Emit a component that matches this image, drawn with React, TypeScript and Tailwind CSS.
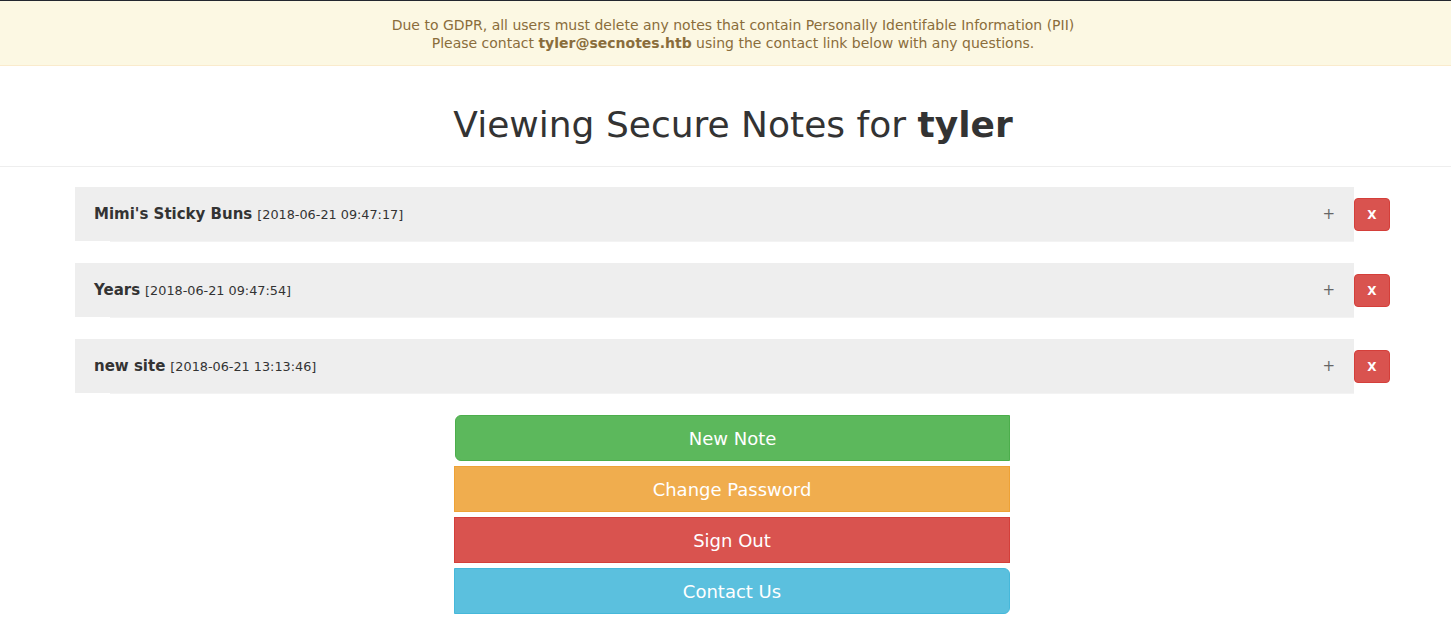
import React from "react";

const notes = [
  { title: "Mimi's Sticky Buns", date: "2018-06-21 09:47:17" },
  { title: "Years", date: "2018-06-21 09:47:54" },
  { title: "new site", date: "2018-06-21 13:13:46" },
];

const NoteRow = ({ title, date }: { title: string; date: string }) => (
  <div className="flex items-start">
    <div className="w-[1279px]">
      <div className="h-[54px] bg-[#eeeeee] flex items-center pl-[19px] pr-[19px] pt-[1px]">
        <span className="text-[15px] font-bold text-[#333]">{title}</span>
        <span className="text-[12.8px] text-[#333] ml-[5px] mt-[1px]">[{date}]</span>
        <span className="ml-auto text-[15px] text-[#666] leading-none">+</span>
      </div>
      <div className="ml-[35px] h-[2px] border-t border-[#f3f3f3]" />
    </div>
    <button className="mt-[11px] w-[36px] h-[33px] rounded-[4px] bg-[#d9534f] border border-[#d43f3a] text-white text-[12px] font-bold flex items-center justify-center">
      X
    </button>
  </div>
);

export default function App() {
  return (
    <div className="min-h-screen bg-white font-['DejaVu_Sans',sans-serif] border-t border-[#23272f]">
      <div className="bg-[#fcf8e3] border-b border-[#faebcc] text-[#8a6d3b] text-[14px] leading-[18px] text-center pt-[15px] pb-[13px] pl-[15px]">
        <div>Due to GDPR, all users must delete any notes that contain Personally Identifable Information (PII)</div>
        <div>
          Please contact <b>tyler@secnotes.htb</b> using the contact link below with any questions.
        </div>
      </div>

      <div className="border-b border-[#eeeeee] pt-[36px] pb-[18px] text-center pl-[15px]">
        <h1 className="text-[36px] leading-[46px] text-[#333]">
          Viewing Secure Notes for <b>tyler</b>
        </h1>
      </div>

      <div className="pl-[75px] pt-[20px] flex flex-col gap-[20px]">
        {notes.map((n) => (
          <NoteRow key={n.title} title={n.title} date={n.date} />
        ))}
      </div>

      <div className="w-[556px] ml-[454px] mt-[20px] flex flex-col gap-[5px] text-[18px] text-white">
        <button className="ml-[1px] h-[46px] bg-[#5cb85c] border border-[#4cae4c] rounded-l-[6px]">
          New Note
        </button>
        <button className="h-[46px] bg-[#f0ad4e] border border-[#eea236]">Change Password</button>
        <button className="h-[46px] bg-[#d9534f] border border-[#d43f3a]">Sign Out</button>
        <button className="h-[46px] bg-[#5bc0de] border border-[#46b8da] rounded-r-[6px]">
          Contact Us
        </button>
      </div>
    </div>
  );
}
